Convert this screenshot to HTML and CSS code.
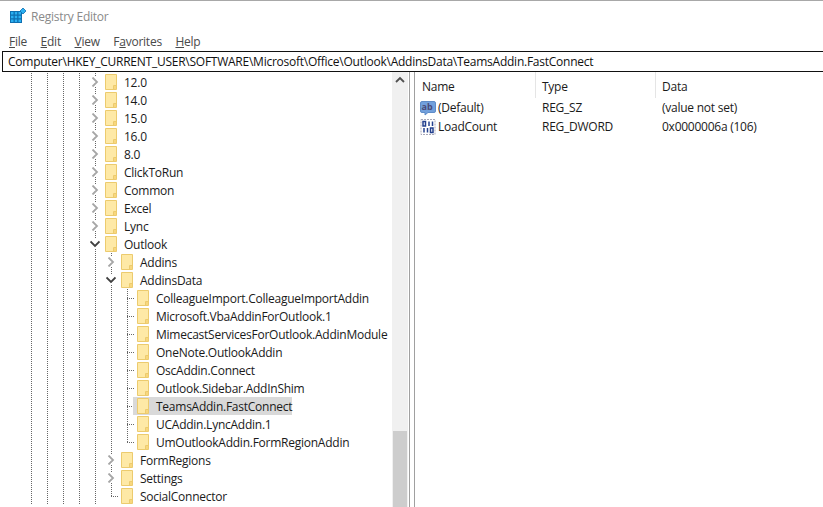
FILE: index.html
```html
<!DOCTYPE html>
<html lang="en">
<head>
    <meta charset="UTF-8">
    <title>Registry Editor</title>
    <link rel="stylesheet" href="styles.css">
</head>
<body>
    <svg class="defs" width="0" height="0">
        <symbol id="folder" viewBox="0 0 12 16">
            <path d="M.5 .5H11.500V15.500H.5Z" fill="#fee9a6" stroke="#eccb6e"/>
            <path d="M9 15V12H11V15Z" fill="#f8d77e"/>
            <path d="M8.500 15.500V11.500H11.500" fill="none" stroke="#eccb6e"/>
        </symbol>
        <symbol id="closed" viewBox="0 0 10 10">
            <path d="M2.5 .5L7 5L2.5 9.5" fill="none" stroke="#a6a6a6" stroke-width="1.8"/>
        </symbol>
        <symbol id="open" viewBox="0 0 10 10">
            <path d="M.5 2.5L5 7L9.5 2.5" fill="none" stroke="#404040" stroke-width="1.8"/>
        </symbol>
    </svg>

    <div class="window">
        <div class="titlebar">
            <svg class="app-icon" width="16" height="16" viewBox="0 0 16 16">
                <path d="M0 3H12V15H0Z" fill="#0f6fb0"/>
                <path d="M1 4H3.5V6.5H1ZM4.8 4H7.2V6.5H4.8ZM8.5 4H11V6.5H8.5ZM1 7.8H3.5V10.2H1ZM4.8 7.8H7.2V10.2H4.8ZM8.5 7.8H11V10.2H8.5ZM1 11.5H3.5V14H1ZM4.8 11.5H7.2V14H4.8ZM8.5 11.5H11V14H8.5Z" fill="#2ab0f2"/>
                <path d="M13 0L16 3L13 6L10 3Z" fill="#2ab0f2" stroke="#0f6fb0" stroke-width=".8"/>
            </svg>
            <span class="title">Registry Editor</span>
        </div>

        <div class="menubar">
            <span><u>F</u>ile</span>
            <span><u>E</u>dit</span>
            <span><u>V</u>iew</span>
            <span>F<u>a</u>vorites</span>
            <span><u>H</u>elp</span>
        </div>

        <div class="address">Computer\HKEY_CURRENT_USER\SOFTWARE\Microsoft\Office\Outlook\AddinsData\TeamsAddin.FastConnect</div>

        <div class="panes">
            <div class="tree-pane">
                <div class="tree" id="tree"></div>
                <div class="scrollbar">
                    <svg class="scroll-up" width="10" height="10" viewBox="0 0 10 10"><path d="M1 7L5 3L9 7" fill="none" stroke="#505050" stroke-width="1.8"/></svg>
                    <div class="thumb"></div>
                </div>
            </div>

            <div class="values">
                <div class="value-row value-head">
                    <span class="col-name">Name</span>
                    <span class="col-type">Type</span>
                    <span class="col-data">Data</span>
                </div>
                <div class="value-row">
                    <span class="col-name">
                        <svg width="16" height="16" viewBox="0 0 16 16">
                            <path d="M2 1.5H14Q15.500 1.500 15.500 3V11Q15.500 12.500 14 12.500H8L5 15V12.500H2Q.5 12.500 .5 11V3Q.5 1.500 2 1.500Z" fill="#72a0dc" stroke="#5f8cc8"/>
                            <text x="1.5" y="10" class="ab-text">ab</text>
                        </svg>
                        (Default)
                    </span>
                    <span class="col-type">REG_SZ</span>
                    <span class="col-data">(value not set)</span>
                </div>
                <div class="value-row">
                    <span class="col-name">
                        <svg width="16" height="16" viewBox="0 0 16 16">
                            <path d="M1 .5H15V15.500H1Z" fill="#fff" stroke="#a8a8b8" stroke-dasharray="2 1"/>
                            <path d="M3 2.500H5.500V7H3ZM9 2.500V7M12.500 2.500V7M4 9V13.500M7.500 9V13.500M10.500 9H13V13.500H10.500Z" fill="none" stroke="#23408e" stroke-width="1.500"/>
                        </svg>
                        LoadCount
                    </span>
                    <span class="col-type">REG_DWORD</span>
                    <span class="col-data">0x0000006a (106)</span>
                </div>
            </div>
        </div>
    </div>
    <script src="tree.js"></script>
</body>
</html>
```

FILE: styles.css
```css
html, body {
    margin: 0;
    height: 100%;
    overflow: hidden;
}

body {
    font-family: 'Open Sans', 'Noto Sans', sans-serif;
    font-size: 12px;
    letter-spacing: -0.25px;
    color: #1a1a1a;
    background-color: #fff;
}

.defs {
    display: block;
    height: 0;
}

.window {
    height: 100%;
    box-sizing: border-box;
    border-top: 1px solid #a8a8a8;
    display: flex;
    flex-direction: column;
}

.titlebar {
    height: 30px;
    display: flex;
    align-items: center;
    padding-left: 10px;
    gap: 5px;
}

.title {
    color: #8a8a8a;
}

.menubar {
    height: 20px;
    display: flex;
    align-items: center;
    gap: 13.6px;
    padding-left: 9px;
    color: #4a4a4a;
}

.address {
    height: 19px;
    line-height: 19px;
    margin-left: 2px;
    border: 1px solid #111;
    border-right: none;
    padding-left: 5px;
    white-space: nowrap;
    color: #111;
}

.panes {
    flex: 1;
    display: flex;
    min-height: 0;
}

.tree-pane {
    width: 409px;
    display: flex;
    flex-shrink: 0;
    border-right: 1px solid #a0a0a0;
}

.tree {
    flex: 1;
    padding-top: 1px;
    overflow: hidden;
}

.row {
    height: 18px;
    display: flex;
    align-items: center;
    padding-left: 23px;
    white-space: nowrap;
}

/* one indent level, the dots are 1px on 1px off */
.cell {
    width: 16px;
    height: 18px;
    flex-shrink: 0;
    display: flex;
    align-items: center;
    justify-content: center;
}

.line {
    background: repeating-linear-gradient(#666 0 1px, transparent 1px 2px) 8px 0 / 1px 100% no-repeat;
}

.elbow {
    background:
        repeating-linear-gradient(#666 0 1px, transparent 1px 2px) 8px 0 / 1px 9px no-repeat,
        repeating-linear-gradient(90deg, #666 0 1px, transparent 1px 2px) 8px 9px / 8px 1px no-repeat;
}

.tee {
    background:
        repeating-linear-gradient(#666 0 1px, transparent 1px 2px) 8px 0 / 1px 100% no-repeat,
        repeating-linear-gradient(90deg, #666 0 1px, transparent 1px 2px) 8px 9px / 8px 1px no-repeat;
}

.chev svg {
    background-color: #fff;
}

.folder {
    width: 12px;
    height: 16px;
    margin-left: 2px;
    flex-shrink: 0;
}

.label {
    margin-left: 7px;
}

.selbox {
    display: flex;
    align-items: center;
    height: 18px;
    margin-left: -2px;
    padding-left: 2px;
    background-color: #d9d9d9;
}

.scrollbar {
    width: 16px;
    margin-right: 1px;
    flex-shrink: 0;
    background-color: #f0f0f0;
    display: flex;
    flex-direction: column;
    align-items: center;
}

.scroll-up {
    margin-top: 3px;
}

.thumb {
    width: 14px;
    margin-top: 346px;
    flex: 1;
    background-color: #cdcdcd;
}

.values {
    flex: 1;
    margin-left: 4px;
    border-left: 1px solid #a0a0a0;
}

.value-row {
    height: 19px;
    display: flex;
    align-items: center;
    white-space: nowrap;
}

.value-head {
    height: 26px;
}

.col-name {
    width: 121px;
    box-sizing: border-box;
    padding-left: 5px;
    display: flex;
    align-items: center;
    gap: 2px;
}

.col-type {
    width: 120px;
    box-sizing: border-box;
    padding-left: 6px;
}

.col-data {
    padding-left: 6px;
}

.value-head .col-name {
    padding-left: 7px;
}

.value-head span {
    height: 100%;
    box-sizing: border-box;
    padding-bottom: 2px;
    padding-top: 4px;
    display: flex;
    align-items: center;
}

.value-head .col-name,
.value-head .col-type {
    border-right: 1px solid #e5e5e5;
}

.ab-text {
    font-size: 9px;
    font-weight: 700;
    letter-spacing: 0;
    fill: #4a4a78;
}
```

FILE: tree.js
```js
// [indent cells, last cell, label]  l = line, t = tee, e = elbow, c = closed, o = open
const rows = [
    ['llll', 'c', '12.0'],
    ['llll', 'c', '14.0'],
    ['llll', 'c', '15.0'],
    ['llll', 'c', '16.0'],
    ['llll', 'c', '8.0'],
    ['llll', 'c', 'ClickToRun'],
    ['llll', 'c', 'Common'],
    ['llll', 'c', 'Excel'],
    ['llll', 'c', 'Lync'],
    ['llll', 'o', 'Outlook'],
    ['lllll', 'c', 'Addins'],
    ['lllll', 'o', 'AddinsData'],
    ['llllll', 't', 'ColleagueImport.ColleagueImportAddin'],
    ['llllll', 't', 'Microsoft.VbaAddinForOutlook.1'],
    ['llllll', 't', 'MimecastServicesForOutlook.AddinModule'],
    ['llllll', 't', 'OneNote.OutlookAddin'],
    ['llllll', 't', 'OscAddin.Connect'],
    ['llllll', 't', 'Outlook.Sidebar.AddInShim'],
    ['llllll', 't', 'TeamsAddin.FastConnect', true],
    ['llllll', 't', 'UCAddin.LyncAddin.1'],
    ['llllll', 'e', 'UmOutlookAddin.FormRegionAddin'],
    ['lllll', 'c', 'FormRegions'],
    ['lllll', 'c', 'Settings'],
    ['lllll', 'e', 'SocialConnector'],
];

const kinds = { l: 'line', t: 'tee', e: 'elbow', c: 'line chev', o: 'line chev' };

function cell(kind) {
    let icon = '';
    if (kind === 'c') icon = '<svg width="10" height="10"><use href="#closed"/></svg>';
    if (kind === 'o') icon = '<svg width="10" height="10"><use href="#open"/></svg>';
    return '<span class="cell ' + kinds[kind] + '">' + icon + '</span>';
}

document.getElementById('tree').innerHTML = rows.map(function(r) {
    const cells = r[0].split('').map(cell).join('') + cell(r[1]);
    const entry = '<svg class="folder"><use href="#folder"/></svg><span class="label">' + r[2] + '</span>';
    if (r[3]) {
        return '<div class="row">' + cells + '<span class="selbox">' + entry + '</span></div>';
    }
    return '<div class="row">' + cells + entry + '</div>';
}).join('');
```
